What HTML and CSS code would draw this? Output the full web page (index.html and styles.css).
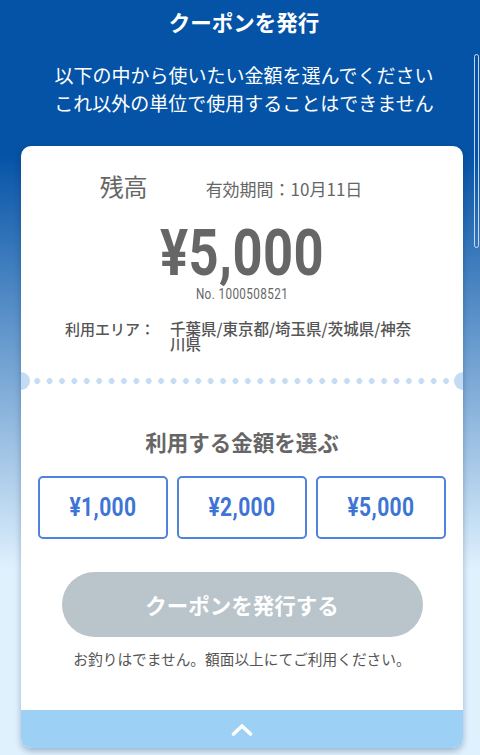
FILE: index.html
```html
<!DOCTYPE html>
<html lang="ja">
<head>
    <meta charset="UTF-8">
    <meta name="viewport" content="width=device-width, initial-scale=1.0">
    <title>クーポンを発行</title>
    <link rel="stylesheet" href="styles.css">
</head>
<body>
    <div class="page">
        <h1 class="title">クーポンを発行</h1>
        <p class="lead">以下の中から使いたい金額を選んでください<br>これ以外の単位で使用することはできません</p>

        <div class="card">
            <div class="balance-head">
                <span class="balance-label">残高</span>
                <span class="expire">有効期間：10月11日</span>
            </div>
            <div class="balance num">¥5,000</div>
            <div class="serial num">No. 1000508521</div>

            <div class="area">
                <span class="area-label">利用エリア：</span>
                <span class="area-list">千葉県/東京都/埼玉県/茨城県/神奈川県</span>
            </div>

            <div class="perforation"></div>

            <h2 class="choose-title">利用する金額を選ぶ</h2>
            <div class="amounts">
                <button class="amount"><span class="num">¥1,000</span></button>
                <button class="amount"><span class="num">¥2,000</span></button>
                <button class="amount"><span class="num">¥5,000</span></button>
            </div>

            <button class="issue" disabled>クーポンを発行する</button>
            <p class="note">お釣りはでません。額面以上にてご利用ください。</p>

            <div class="card-foot">
                <svg width="22" height="13" viewBox="0 0 22 13">
                    <path d="M2.5 11 L11 3 L19.5 11" fill="none" stroke="#fff" stroke-width="3.6" stroke-linecap="round" stroke-linejoin="round"/>
                </svg>
            </div>
        </div>
    </div>
    <div class="scroll-thumb"></div>
</body>
</html>
```

FILE: styles.css
```css
* {
    margin: 0;
    padding: 0;
    box-sizing: border-box;
}

body {
    font-family: "Noto Sans CJK JP", "Noto Sans", sans-serif;
    background: linear-gradient(to bottom, #0553a6 0, #0553a6 155px, #dff1fd 570px, #dff1fd 100%);
    min-height: 755px;
    overflow: hidden;
}

.page {
    padding: 8px 17px 0 21px;
}

/* condensed figures */
.num {
    font-family: Roboto, "Liberation Sans", sans-serif;
    letter-spacing: 0.5px;
}

.title {
    color: #fff;
    font-size: 21.5px;
    font-weight: bold;
    line-height: 28px;
    text-align: center;
    padding-left: 4px;
}

.lead {
    color: #fff;
    font-size: 19px;
    line-height: 28px;
    text-align: center;
    margin-top: 25px;
    padding-left: 4px;
}

.card {
    position: relative;
    margin-top: 29px;
    background: #fff;
    border-radius: 10px;
    overflow: hidden;
    box-shadow: 0 3px 6px rgba(0, 40, 90, 0.3);
}

.balance-head {
    display: flex;
    justify-content: center;
    align-items: baseline;
    gap: 58px;
    padding-top: 24px;
    padding-right: 22px;
    color: #666;
    line-height: 32px;
}

.balance-label {
    font-size: 24px;
}

.expire {
    font-size: 17px;
}

.balance {
    margin-top: 18px;
    text-align: center;
    font-size: 64px;
    font-weight: bold;
    line-height: 62px;
    color: #666;
    transform: scaleX(0.82);
}

.serial {
    margin-top: 2px;
    text-align: center;
    font-size: 15px;
    line-height: 14px;
    color: #666;
    transform: scaleX(0.78);
}

.area {
    display: flex;
    margin-top: 20px;
    padding-left: 44px;
    font-size: 15px;
    font-weight: 500;
    line-height: 15px;
    color: #555;
}

.area-label {
    width: 105px;
    flex-shrink: 0;
}

.area-list {
    width: 246px;
    font-size: 15.5px;
}

.perforation {
    position: relative;
    height: 18px;
    margin-top: 21px;
    background: radial-gradient(circle, #c5dcf3 2.7px, transparent 3.2px) 10px 0 / 12.4px 18px repeat-x;
    background-clip: content-box;
    padding: 0 10px;
}

.perforation::before,
.perforation::after {
    content: "";
    position: absolute;
    top: 0;
    width: 18px;
    height: 18px;
    border-radius: 50%;
    background: #c3dcf4;
}

.perforation::before {
    left: -9px;
}

.perforation::after {
    right: -9px;
}

.choose-title {
    margin-top: 37px;
    text-align: center;
    font-size: 21.5px;
    font-weight: bold;
    line-height: 30px;
    color: #666;
}

.amounts {
    display: grid;
    grid-template-columns: repeat(3, 1fr);
    gap: 9px;
    margin-top: 19px;
    padding: 0 17px;
}

.amount {
    height: 63px;
    background: #fff;
    border: 2px solid #4f83dc;
    border-radius: 5px;
    color: #3d74d6;
    font-size: 25px;
    font-weight: bold;
}

.amount .num {
    display: inline-block;
    transform: scaleX(0.84);
}

.issue {
    display: block;
    width: 361px;
    height: 65px;
    margin: 33px auto 0;
    border: none;
    border-radius: 33px;
    background: #b9c4cb;
    color: #fff;
    font-family: "Noto Sans CJK JP", sans-serif;
    font-size: 21.5px;
    font-weight: bold;
}

.note {
    margin-top: 12px;
    text-align: center;
    font-size: 14.7px;
    line-height: 20px;
    color: #555;
}

.card-foot {
    display: flex;
    justify-content: center;
    align-items: center;
    height: 38px;
    margin-top: 41px;
    background: #9dd0f5;
}

.scroll-thumb {
    position: absolute;
    left: 474px;
    top: 54px;
    width: 5px;
    height: 194px;
    border: 1px solid rgba(230, 236, 244, 0.85);
    border-radius: 3px;
}
```
